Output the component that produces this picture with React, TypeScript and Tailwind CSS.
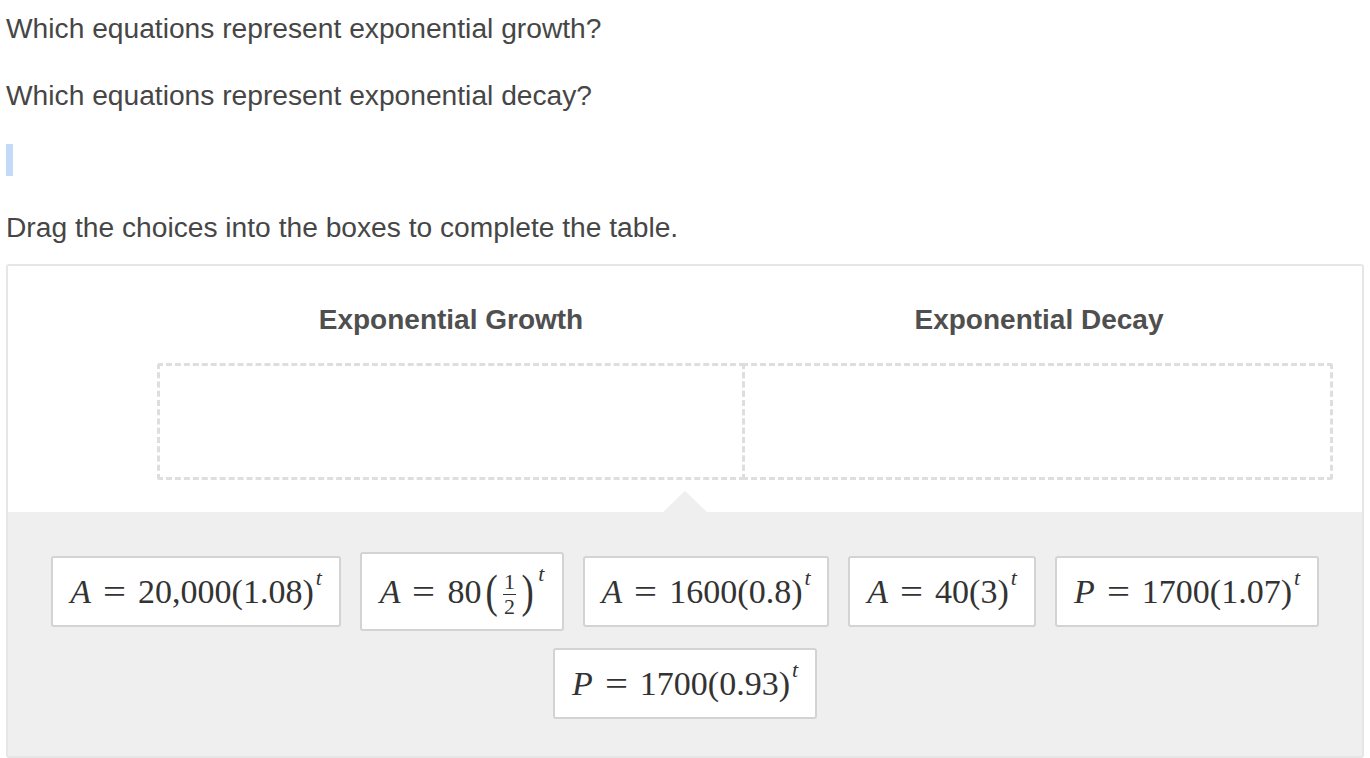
import React from "react";

const serif = { fontFamily: '"Liberation Serif", "Times New Roman", serif' };

function Sup() {
  return <span className="relative -top-[14px] ml-[2px] text-[22px] italic">t</span>;
}

function Eq() {
  return <span className="mx-[14px] inline-block scale-x-[1.2]">=</span>;
}

function Tile({ width, tall, children }: { width: string; tall?: boolean; children: React.ReactNode }) {
  return (
    <div
      className={`${width} ${tall ? "h-[79px]" : "h-[71px]"} flex items-center justify-center whitespace-nowrap rounded-[3px] border-2 border-[#d3d3d3] bg-white text-[34px] text-[#333]`}
      style={serif}
    >
      {children}
    </div>
  );
}

function Half() {
  // one half, between tall parentheses
  return (
    <span className="ml-[2px] inline-flex items-center">
      <span className="inline-block scale-x-[0.8] text-[46px] font-light leading-none">(</span>
      <span className="mx-[4px] mt-[6px] inline-flex flex-col items-center text-[22px] leading-[20px]">
        <span>1</span>
        <span className="my-[2px] block w-[13px] border-t border-[#333]"></span>
        <span>2</span>
      </span>
      <span className="inline-block scale-x-[0.8] text-[46px] font-light leading-none">)</span>
    </span>
  );
}

export default function App() {
  return (
    <div
      className="min-h-screen bg-white px-[6px] text-[#464646]"
      style={{ fontFamily: '"Liberation Sans", Arial, Helvetica, sans-serif' }}
    >
      <p className="pt-[12px] text-[28.2px] leading-[32px]">Which equations represent exponential growth?</p>
      <p className="mt-[35px] text-[28.2px] leading-[32px]">Which equations represent exponential decay?</p>
      <div className="mt-[33px] h-[32px] w-[7px] bg-[#c3dbf7]"></div>
      <p className="mt-[35px] text-[28.2px] leading-[32px]">Drag the choices into the boxes to complete the table.</p>

      <div className="mt-[21px] rounded-[3px] border-2 border-[#e6e6e6]">
        {/* table */}
        <div className="bg-white pb-[32px] pt-[38px]">
          <div className="grid grid-cols-[149px_588px_588px]">
            <div></div>
            <div className="text-center text-[28px] font-bold leading-[32px] text-[#4f4f4f]">Exponential Growth</div>
            <div className="text-center text-[28px] font-bold leading-[32px] text-[#4f4f4f]">Exponential Decay</div>
          </div>
          <div className="mt-[27px] grid grid-cols-[149px_588px_588px]">
            <div></div>
            <div className="h-[117px] rounded-[3px] border-[3px] border-dashed border-[#dedede]"></div>
            <div className="-ml-[3px] h-[117px] w-[591px] rounded-[3px] border-[3px] border-dashed border-[#dedede]"></div>
          </div>
        </div>

        {/* choices */}
        <div className="relative bg-[#efefef] pb-[37px] pt-[40px]">
          <div className="absolute left-1/2 -top-[21px] h-0 w-0 -translate-x-1/2 border-b-[21px] border-l-[22px] border-r-[22px] border-b-[#efefef] border-l-transparent border-r-transparent"></div>
          <div className="flex flex-wrap items-center justify-center gap-x-[19px] gap-y-[17px]">
            <Tile width="w-[290px]">
              <span className="italic">A</span>
              <Eq />
              <span>20,000(1.08)</span>
              <Sup />
            </Tile>
            <Tile width="w-[204px]" tall>
              <span className="italic">A</span>
              <Eq />
              <span>80</span>
              <Half />
              <span className="relative -top-[18px] ml-[3px] text-[22px] italic">t</span>
            </Tile>
            <Tile width="w-[246px]">
              <span className="italic">A</span>
              <Eq />
              <span>1600(0.8)</span>
              <Sup />
            </Tile>
            <Tile width="w-[188px]">
              <span className="italic">A</span>
              <Eq />
              <span>40(3)</span>
              <Sup />
            </Tile>
            <Tile width="w-[264px]">
              <span className="italic">P</span>
              <Eq />
              <span>1700(1.07)</span>
              <Sup />
            </Tile>
            <Tile width="w-[264px]">
              <span className="italic">P</span>
              <Eq />
              <span>1700(0.93)</span>
              <Sup />
            </Tile>
          </div>
        </div>
      </div>
    </div>
  );
}
